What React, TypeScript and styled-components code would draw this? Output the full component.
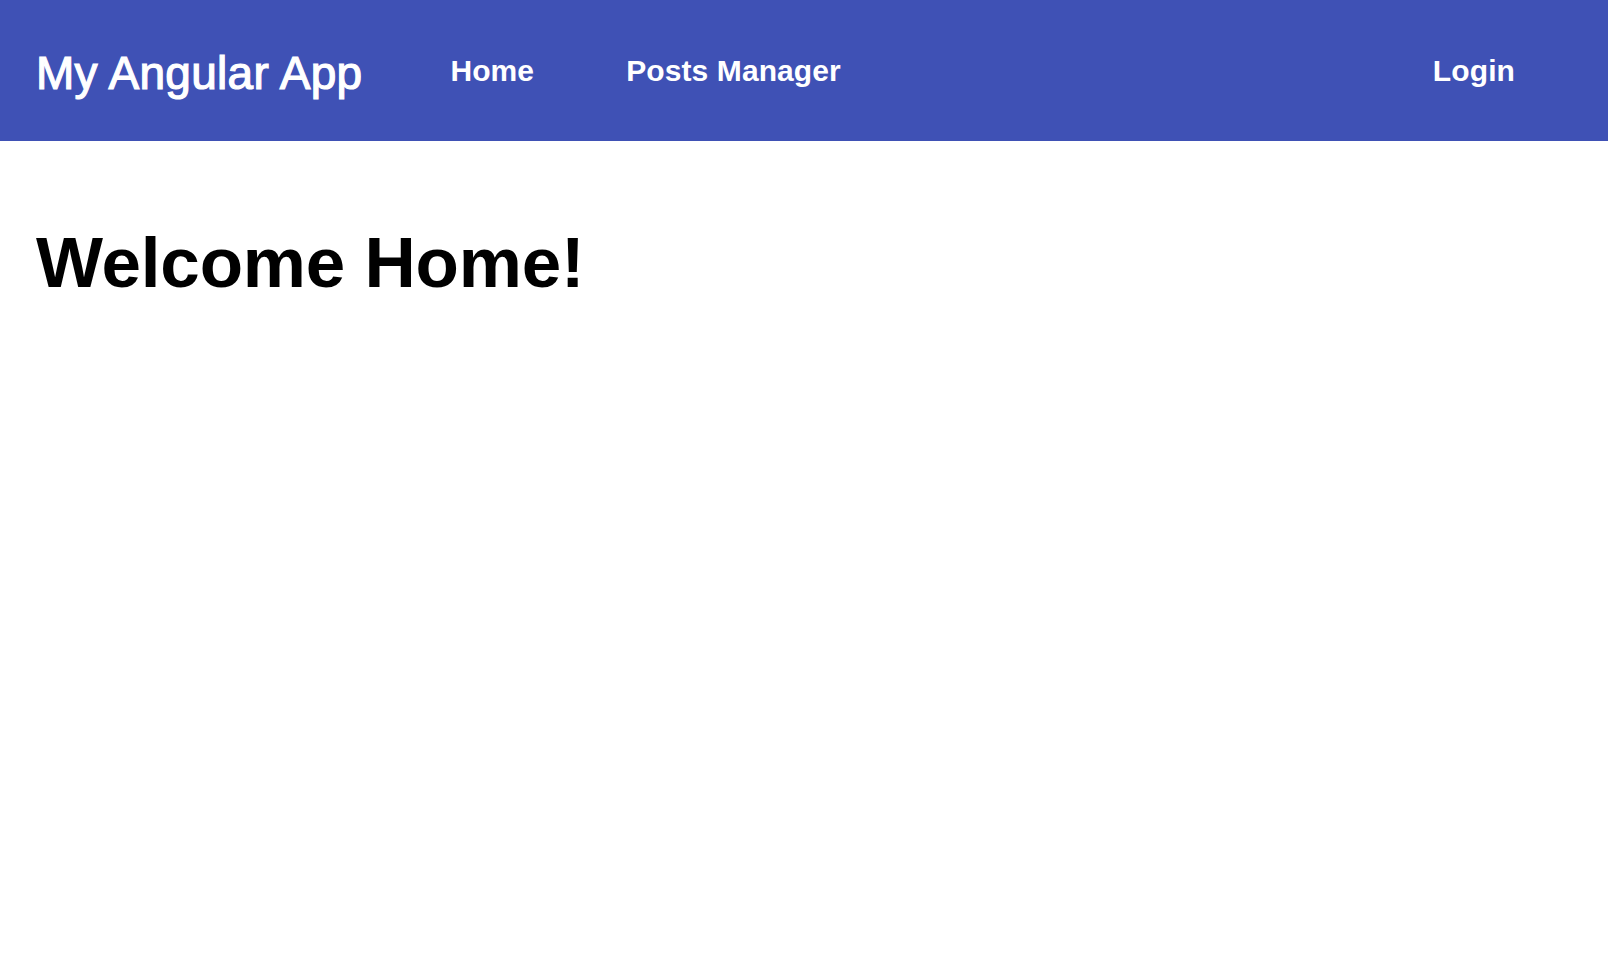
import React from "react";
import styled, { createGlobalStyle } from "styled-components";

const GlobalStyle = createGlobalStyle`
  html, body {
    margin: 0;
    padding: 0;
    background: #ffffff;
  }
  body {
    font-family: "Liberation Sans", Arial, Helvetica, sans-serif;
  }
  * { box-sizing: border-box; }
`;

const Page = styled.div`
  min-height: 100vh;
  display: flex;
  flex-direction: column;
`;

const Toolbar = styled.header`
  height: 141px;
  background: #3f51b5;
  display: flex;
  align-items: center;
  padding: 0 47px 0 36px;
  color: #ffffff;
`;

const Brand = styled.div`
  font-size: 46px;
  line-height: 1;
  font-weight: 400;
  -webkit-text-stroke: 1.2px #ffffff;
  letter-spacing: 0.3px;
  padding-top: 5px;
  margin-right: 42px;
  white-space: nowrap;
`;

const NavLink = styled.a<{ $push?: boolean }>`
  font-size: 30px;
  line-height: 1;
  font-weight: 700;
  color: #ffffff;
  text-decoration: none;
  padding: 0 46px;
  letter-spacing: 0.1px;
  white-space: nowrap;
  cursor: pointer;
  margin-left: ${(p) => (p.$push ? "auto" : "0")};
`;

const Main = styled.main`
  padding: 86px 36px 0 36px;
`;

const Heading = styled.h1`
  margin: 0;
  font-size: 71px;
  line-height: 1;
  font-weight: 700;
  letter-spacing: -0.2px;
  color: #000000;
`;

export default function App() {
  return (
    <>
      <GlobalStyle />
      <Page>
        <Toolbar>
          <Brand>My Angular App</Brand>
          <NavLink>Home</NavLink>
          <NavLink>Posts Manager</NavLink>
          <NavLink $push>Login</NavLink>
        </Toolbar>
        <Main>
          <Heading>Welcome Home!</Heading>
        </Main>
      </Page>
    </>
  );
}
